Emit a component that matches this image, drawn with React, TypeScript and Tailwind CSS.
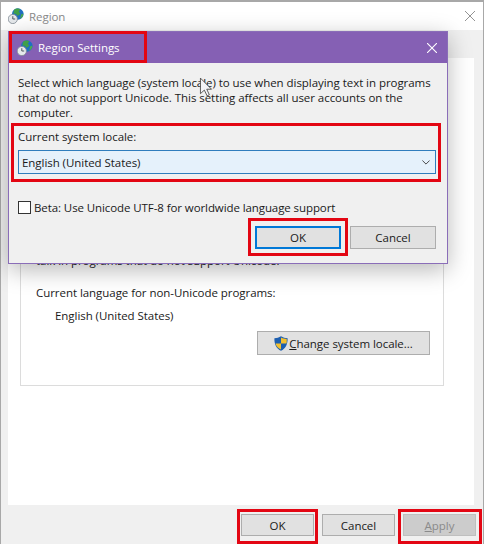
import React from "react";

function GlobeIcon({ className }: { className: string }) {
  return (
    <svg viewBox="0 0 16 16" className={className}>
      <circle cx="9.8" cy="6" r="5.8" fill="#1f6fc4" />
      <path d="M6 1.8 C8 0 11 0 12.4 1.4 L10.8 3.6 L12.4 5.8 L9.6 8 L8 6 L5.4 5.4 Z" fill="#3f9f4a" />
      <path d="M13 6.6 L15.4 5.6 C15.4 8 14 10.2 12.2 11 Z" fill="#4aa850" />
      <circle cx="4.8" cy="11" r="4.6" fill="#e6e9ec" stroke="#808a94" strokeWidth="0.8" />
      <path d="M4.8 8.2 V11 H7.2" fill="none" stroke="#3e4852" strokeWidth="0.9" />
    </svg>
  );
}

function ShieldIcon() {
  return (
    <svg viewBox="0 0 14 15" className="h-[15px] w-[14px] shrink-0">
      <path d="M7 0.3 C9 1.6 11 2.1 13.6 2.2 C13.9 8 11.5 12.6 7 14.8 C2.5 12.6 0.1 8 0.4 2.2 C3 2.1 5 1.6 7 0.3 Z" fill="#1d5fb0" />
      <path d="M7 1.6 V7.4 H12.6 C12.8 6 12.8 4.6 12.7 3.1 C10.8 3 8.8 2.6 7 1.6 Z" fill="#f4c02f" />
      <path d="M7 7.4 V13.6 C4.4 12.2 2.2 10.2 1.5 7.4 Z" fill="#f4c02f" />
    </svg>
  );
}

function WinButton({ label, className }: { label: React.ReactNode; className: string }) {
  return (
    <button type="button" className={`flex items-center justify-center bg-[#e1e1e1] ${className}`}>
      {label}
    </button>
  );
}

export default function App() {
  return (
    <div className="relative h-[544px] w-[484px] overflow-hidden bg-[#f0f0f0] font-['Open_Sans','Noto_Sans',sans-serif] text-[11.5px] leading-[15px] tracking-[-0.05px] text-[#1a1a1a]">
      {/* parent window */}
      <div className="flex h-full flex-col border-x border-t-2 border-[#a8a8a8]">
        <div className="flex h-[28px] shrink-0 items-center justify-between bg-white pl-[7px] pr-[8px]">
          <div className="flex items-center gap-[5px]">
            <GlobeIcon className="h-4 w-4" />
            <span className="text-[#8a8a8a]">Region</span>
          </div>
          <svg viewBox="0 0 10 10" className="h-[10px] w-[10px]">
            <path d="M0 0 L10 10 M10 0 L0 10" stroke="#777" strokeWidth="0.8" />
          </svg>
        </div>
        <div className="h-[28px] shrink-0" />
        <div className="ml-[7px] mr-[9px] flex flex-1 flex-col bg-white pl-3 pr-[30px] pt-[140px]">
          <div className="h-[188px] border border-[#dcdcdc] pl-[15px] pr-[13px] pt-[54px]">
            <div>talk in programs that do not support Unicode.</div>
            <div className="mt-[17px]">Current language for non-Unicode programs:</div>
            <div className="ml-[19px] mt-2">English (United States)</div>
            <div className="mt-2 flex justify-end">
              <WinButton
                className="h-6 w-[173px] gap-px border border-[#adadad]"
                label={
                  <>
                    <ShieldIcon />
                    <span>
                      <span className="underline">C</span>hange system locale...
                    </span>
                  </>
                }
              />
            </div>
          </div>
        </div>
        <div className="flex h-[39px] shrink-0 items-start justify-end gap-2 pr-[7px] pt-[9px]">
          <WinButton className="h-[22px] w-[73px] border border-[#adadad]" label="OK" />
          <WinButton className="h-[22px] w-[73px] border border-[#adadad]" label="Cancel" />
          <WinButton
            className="h-[22px] w-[73px] border border-[#bfbfbf] !bg-[#cccccc] text-[#8a8a8a]"
            label={
              <span>
                <span className="underline">A</span>pply
              </span>
            }
          />
        </div>
      </div>

      {/* Region Settings dialog */}
      <div className="absolute left-2 top-[31px] h-[233px] w-[440px] border border-[#8a6db8] bg-[#f0f0f0] shadow-[0_6px_22px_rgba(0,0,0,0.28)]">
        <div className="flex h-[31px] items-center justify-between bg-[#8560b4] pl-2 pr-[10px] text-white">
          <div className="flex items-center gap-[5px]">
            <GlobeIcon className="h-4 w-4" />
            <span>Region Settings</span>
          </div>
          <svg viewBox="0 0 10 10" className="h-[10px] w-[10px]">
            <path d="M0 0 L10 10 M10 0 L0 10" stroke="#fff" strokeWidth="1.1" />
          </svg>
        </div>
        <div className="pl-[9px] pr-[11px] pt-3">
          <p className="whitespace-nowrap">
            Select which language (system locale) to use when displaying text in programs
            <br />
            that do not support Unicode. This setting affects all user accounts on the
            <br />
            computer.
          </p>
          <div className="mt-[9px]">Current system locale:</div>
          <div className="mt-[6px] flex h-6 items-center justify-between border border-[#2f7dbd] bg-[#e5f1fb] pl-[3px] pr-[5px]">
            <span>English (United States)</span>
            <svg viewBox="0 0 10 6" className="h-[5px] w-[8px]">
              <path d="M0.5 0.5 L5 5 L9.5 0.5" fill="none" stroke="#444" strokeWidth="1.2" />
            </svg>
          </div>
          <label className="mt-[26px] flex items-center gap-[3px]">
            <span className="h-[13px] w-[13px] border border-[#333] bg-white" />
            <span className="tracking-[-0.09px]">Beta: Use Unicode UTF-8 for worldwide language support</span>
          </label>
          <div className="mt-[11px] flex justify-end gap-[9px]">
            <WinButton className="h-[23px] w-[86px] border-2 border-[#0078d7]" label="OK" />
            <WinButton className="h-[23px] w-[86px] border border-[#adadad]" label="Cancel" />
          </div>
        </div>
      </div>

      {/* red annotations */}
      <div className="absolute left-[9px] top-[31px] h-[32px] w-[138px] border-[3px] border-[#e30613]" />
      <div className="absolute left-[11px] top-[123px] h-[59px] w-[430px] border-[3px] border-[#e30613]" />
      <div className="absolute left-[248px] top-[218px] h-[38px] w-[100px] border-[3px] border-[#e30613]" />
      <div className="absolute left-[237px] top-[509px] h-[35px] w-[81px] border-[3px] border-[#e30613]" />
      <div className="absolute left-[398px] top-[509px] h-[35px] w-[84px] border-[3px] border-[#e30613]" />

      {/* mouse cursor */}
      <svg viewBox="0 0 12 18" className="absolute left-[199px] top-[77px] h-[20px] w-[14px]">
        <path d="M1 1 V15 L4.5 11.8 L7 17 L9 16 L6.7 11 H11 Z" fill="#f4f4f8" stroke="#333" strokeWidth="0.7" />
      </svg>
    </div>
  );
}
